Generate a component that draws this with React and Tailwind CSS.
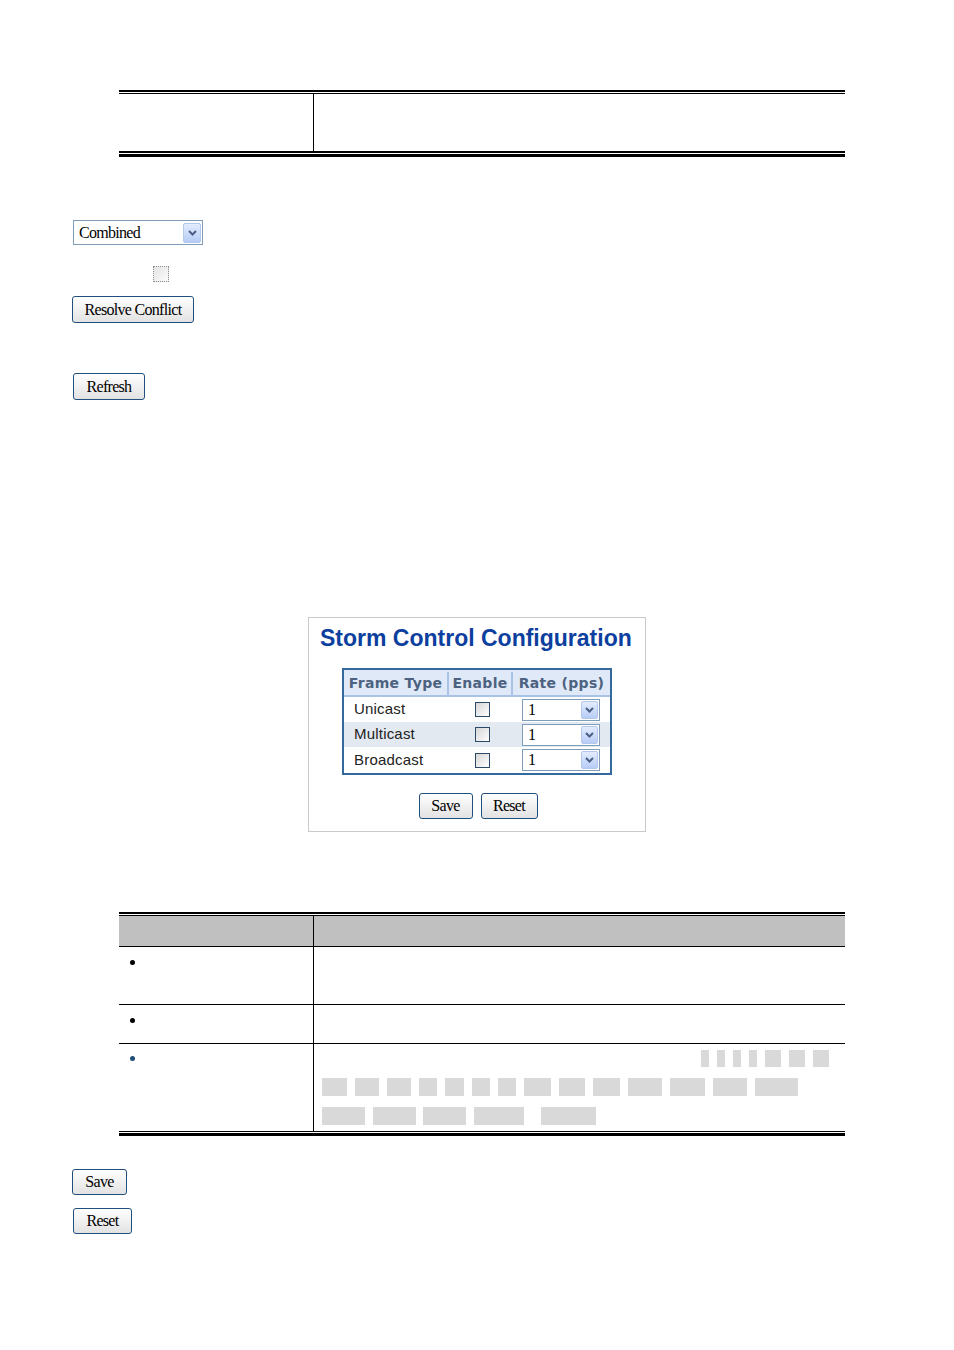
import React from "react";

const Chevron = () => (
  <svg width="9" height="6" viewBox="0 0 9 6">
    <path d="M1 1 L4.5 4.5 L8 1" fill="none" stroke="#4a5f86" strokeWidth="2" />
  </svg>
);

const ArrowBox = ({ className }) => (
  <div
    className={
      "flex items-center justify-center rounded-[2px] border border-[#b4c8ee] bg-linear-to-b from-[#e3ecfd] to-[#b7ccf6] " +
      className
    }
  >
    <Chevron />
  </div>
);

const serif = "font-['Liberation_Serif',serif] text-[16px] tracking-[-0.7px] text-black";

const Btn = ({ children, className }) => (
  <button
    className={
      "flex items-center justify-center rounded-[3px] border border-[#1f4f7f] bg-linear-to-b from-white to-[#e2e2e2] leading-none " +
      serif +
      " " +
      className
    }
  >
    {children}
  </button>
);

const RateSelect = () => (
  <div className="flex h-[22px] w-[78px] items-center justify-between border border-[#7f9db9] bg-white">
    <span className={"pl-[5px] " + serif}>1</span>
    <ArrowBox className="mr-[1px] h-[18px] w-[17px]" />
  </div>
);

const Check = () => (
  <div className="h-[15px] w-[15px] border border-[#2b4a68] bg-linear-to-br from-[#d6d6d6] to-white" />
);

const Row = ({ label, bg, h }) => (
  <div className={"flex " + bg + " " + h}>
    <div className="flex w-[105px] items-center pl-[10px] font-['Liberation_Sans',Arial,sans-serif] text-[15px] tracking-[0.2px] text-[#222]">
      {label}
    </div>
    <div className="flex w-[64px] items-center justify-center pl-[3px]">
      <Check />
    </div>
    <div className="flex w-[97px] items-center pl-[9px]">
      <RateSelect />
    </div>
  </div>
);

const G = ({ w }) => <div className={"h-full bg-[#d9d9d9] " + w} />;

export default function App() {
  return (
    <div className="flex min-h-[1350px] w-[954px] flex-col items-start bg-white pt-[90px]">
      {/* Top table */}
      <div className="ml-[119px] w-[726px]">
        <div className="h-[2px] bg-black" />
        <div className="h-[1px]" />
        <div className="h-[1px] bg-black" />
        <div className="flex h-[57px]">
          <div className="w-[195px] border-r border-black" />
          <div className="flex-1" />
        </div>
        <div className="h-[2px] bg-black" />
        <div className="h-[1px]" />
        <div className="h-[3px] bg-black" />
      </div>

      {/* Combined select */}
      <div className="ml-[73px] mt-[63px] flex h-[25px] w-[130px] items-center justify-between border border-[#7f9db9] bg-white">
        <span className={"pl-[5px] " + serif}>Combined</span>
        <ArrowBox className="mr-[1px] h-[20px] w-[18px]" />
      </div>

      {/* disabled checkbox */}
      <div className="ml-[153px] mt-[21px] h-[16px] w-[16px] border border-dotted border-[#8c8c8c] bg-linear-to-br from-[#e4e4e4] to-[#fbfbfb]" />

      <Btn className="ml-[72px] mt-[14px] h-[27px] w-[122px]">Resolve Conflict</Btn>

      <Btn className="ml-[73px] mt-[50px] h-[27px] w-[72px]">Refresh</Btn>

      {/* Storm Control box */}
      <div className="mt-[217px] ml-[308px] h-[215px] w-[338px] border border-[#c9c9c9] pt-[5px]">
        <div className="pl-[11px] font-['Liberation_Sans',Arial,sans-serif] text-[23px] font-bold leading-[30px] text-[#0d3f9f]">
          Storm Control Configuration
        </div>
        <div className="mx-auto mt-[15px] w-[270px] border-2 border-[#33699c]">
          <div className="flex h-[27px] border-b-2 border-[#a8c3e3] bg-[#dfe9f7] pt-[2px] font-['DejaVu_Sans',Verdana,sans-serif] text-[14px] font-bold tracking-[0.3px] text-[#4d6280]">
            <div className="flex w-[105px] items-center justify-center border-r-2 border-[#a8c3e3]">
              Frame Type
            </div>
            <div className="flex w-[64px] items-center justify-center border-r-2 border-[#a8c3e3]">
              Enable
            </div>
            <div className="flex flex-1 items-center justify-center">Rate (pps)</div>
          </div>
          <Row label="Unicast" bg="bg-white" h="h-[25px]" />
          <Row label="Multicast" bg="bg-[#e3e9f0]" h="h-[25px]" />
          <Row label="Broadcast" bg="bg-white" h="h-[26px]" />
        </div>
        <div className="mt-[18px] flex justify-center gap-[8px] pl-[2px]">
          <Btn className="h-[26px] w-[54px]">Save</Btn>
          <Btn className="h-[26px] w-[57px]">Reset</Btn>
        </div>
      </div>

      {/* Bottom table */}
      <div className="ml-[119px] mt-[80px] w-[726px]">
        <div className="h-[2px] bg-black" />
        <div className="h-[1px]" />
        <div className="h-[1px] bg-black" />
        <div className="flex h-[30px] bg-[#c0c0c0]">
          <div className="w-[195px] border-r border-black" />
          <div className="flex-1" />
        </div>
        <div className="h-[1px] bg-black" />
        <div className="flex h-[57px]">
          <div className="w-[195px] border-r border-black pl-[11px] pt-[13px]">
            <div className="h-[5px] w-[5px] rounded-full bg-black" />
          </div>
          <div className="flex-1" />
        </div>
        <div className="h-[1px] bg-black" />
        <div className="flex h-[38px]">
          <div className="w-[195px] border-r border-black pl-[11px] pt-[13px]">
            <div className="h-[5px] w-[5px] rounded-full bg-black" />
          </div>
          <div className="flex-1" />
        </div>
        <div className="h-[1px] bg-black" />
        <div className="flex h-[87px]">
          <div className="w-[195px] border-r border-black pl-[11px] pt-[12px]">
            <div className="h-[5px] w-[5px] rounded-full bg-[#1f4e79]" />
          </div>
          <div className="flex flex-1 flex-col pl-[8px] pt-[6px]">
            <div className="flex h-[17px] gap-[8px] pl-[379px]">
              <G w="w-[8px]" />
              <G w="w-[8px]" />
              <G w="w-[8px]" />
              <G w="w-[8px]" />
              <G w="w-[16px]" />
              <G w="w-[16px]" />
              <G w="w-[16px]" />
            </div>
            <div className="mt-[11px] flex h-[18px] gap-[8px]">
              <G w="w-[25px]" />
              <G w="w-[24px]" />
              <G w="w-[24px]" />
              <G w="w-[18px]" />
              <G w="w-[19px]" />
              <G w="w-[18px]" />
              <G w="w-[18px]" />
              <G w="w-[27px]" />
              <G w="w-[26px]" />
              <G w="w-[27px]" />
              <G w="w-[34px]" />
              <G w="w-[35px]" />
              <G w="w-[34px]" />
              <G w="w-[43px]" />
            </div>
            <div className="mt-[11px] flex h-[18px]">
              <G w="w-[43px]" />
              <div className="w-[8px]" />
              <G w="w-[43px]" />
              <div className="w-[7px]" />
              <G w="w-[43px]" />
              <div className="w-[8px]" />
              <G w="w-[50px]" />
              <div className="w-[17px]" />
              <G w="w-[55px]" />
            </div>
          </div>
        </div>
        <div className="h-[1px] bg-black" />
        <div className="h-[1px]" />
        <div className="h-[3px] bg-black" />
      </div>

      <Btn className="ml-[72px] mt-[33px] h-[26px] w-[55px]">Save</Btn>
      <Btn className="ml-[73px] mt-[13px] h-[26px] w-[59px]">Reset</Btn>
    </div>
  );
}
